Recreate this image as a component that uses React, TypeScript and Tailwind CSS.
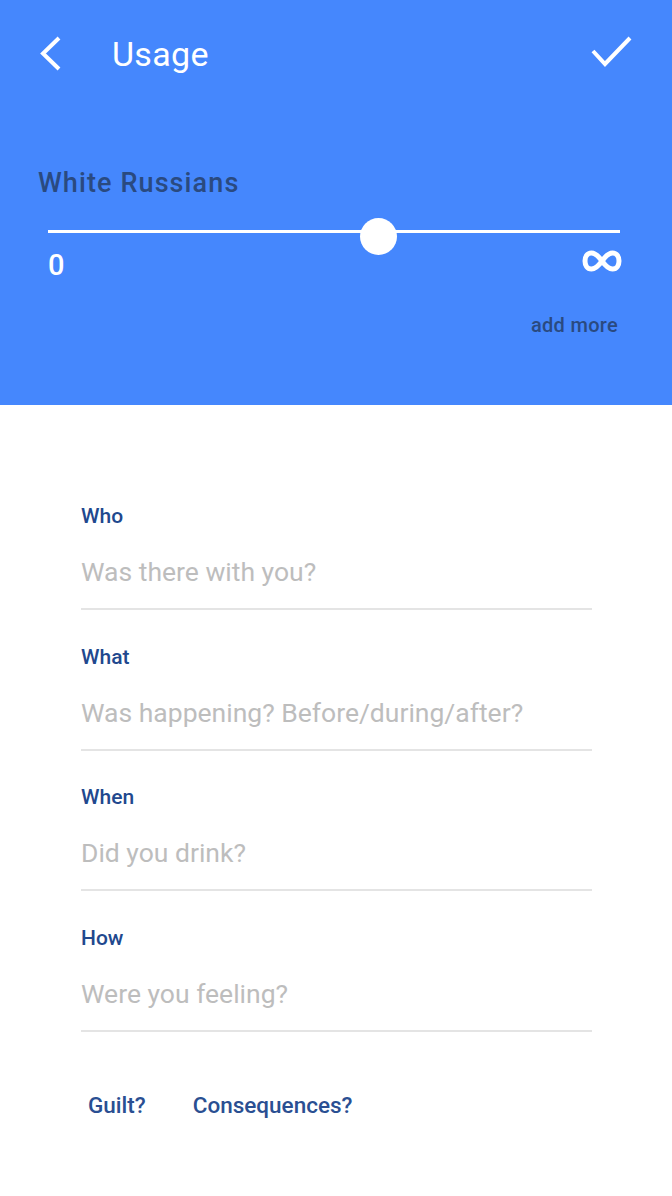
import React from "react";

const fields = [
  { id: "who", label: "Who", hint: "Was there with you?" },
  { id: "what", label: "What", hint: "Was happening? Before/during/after?" },
  { id: "when", label: "When", hint: "Did you drink?" },
  { id: "how", label: "How", hint: "Were you feeling?" },
];

export default function App() {
  return (
    <div className="w-[672px] h-[1196px] bg-white font-['Roboto',sans-serif] overflow-hidden">
      {/* header */}
      <div className="h-[405px] bg-[#4587fd] flex flex-col">
        <div className="flex items-center h-[108px] pl-[38px] pr-[38px]">
          <svg width="24" height="38" viewBox="0 0 24 38" className="mr-[50px]">
            <path d="M21 3 L5 18.5 L21 34" fill="none" stroke="white" strokeWidth="4" />
          </svg>
          <span className="text-white text-[34px] leading-none flex-1 tracking-[0.3px] -mt-[1px]">Usage</span>
          <svg width="44" height="34" viewBox="0 0 44 34" className="-ml-[5px] -mt-[4px]">
            <path d="M3 16 L15 29 L40 3" fill="none" stroke="white" strokeWidth="4" />
          </svg>
        </div>

        <div className="px-[38px] pt-[62px]">
          <div className="text-[#2a4a80] text-[27px] font-medium leading-none tracking-[1.1px]">
            White Russians
          </div>
        </div>

        <div className="relative ml-[48px] mr-[52px] mt-[33px] h-[3px] bg-white">
          <div className="absolute left-[312px] -top-[12px] w-[37px] h-[37px] rounded-full bg-white" />
        </div>

        <div className="flex justify-between items-start ml-[48px] mr-[50px] mt-[18px] h-[26px]">
          <span className="text-white text-[29px] font-medium leading-none">0</span>
          <svg width="40" height="22" viewBox="0 0 40 22" className="-mt-[1px]">
            <path
              d="M20 11 C15 4 12 3 9.5 3 C5 3 3 7 3 11 C3 15 5 19 9.5 19 C12 19 15 18 20 11 C25 4 28 3 30.5 3 C35 3 37 7 37 11 C37 15 35 19 30.5 19 C28 19 25 18 20 11 Z"
              fill="none"
              stroke="white"
              strokeWidth="5"
            />
          </svg>
        </div>

        <div className="flex justify-end mr-[54px] mt-[38px]">
          <span className="text-[#2a4a80] text-[20px] font-medium leading-none tracking-[0.3px]">add more</span>
        </div>
      </div>

      {/* form */}
      <div className="pl-[81px] pr-[80px] pt-[101px]">
        {fields.map((f) => (
          <div key={f.id} className="border-b-[2px] border-[#e4e4e4] mb-[36.5px] h-[104px]">
            <div className="text-[#21488e] text-[21px] font-medium leading-none">{f.label}</div>
            <div className="text-[#bdbdbd] text-[26.5px] leading-none mt-[32px]">{f.hint}</div>
          </div>
        ))}

        <div className="flex gap-[47px] pl-[7px] mt-[62px]">
          <span className="text-[#2a4f92] text-[22.5px] font-medium leading-none">Guilt?</span>
          <span className="text-[#2a4f92] text-[22.5px] font-medium leading-none">Consequences?</span>
        </div>
      </div>
    </div>
  );
}
